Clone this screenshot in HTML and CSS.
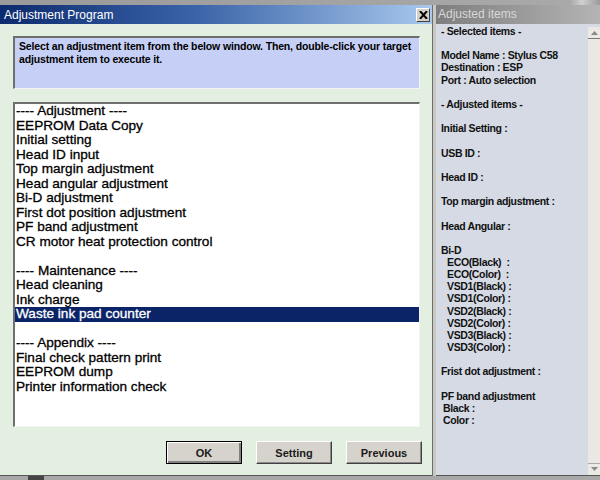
FILE: index.html
```html
<!DOCTYPE html>
<html>
<head>
<meta charset="utf-8">
<link rel="stylesheet" href="styles.css">
</head>
<body>
<div class="topstrip"></div>
<div class="desk">
  <div class="dialog">
    <div class="titlebar">
      <span class="title">Adjustment Program</span>
      <span class="close"><svg width="9" height="8" viewBox="0 0 9 8"><path d="M1 0 L8 8 M8 0 L1 8" stroke="#000" stroke-width="2"/></svg></span>
    </div>
    <div class="body">
      <div class="info">Select an adjustment item from the below window. Then, double-click your target adjustment item to execute it.</div>
      <div class="list">
        <div class="row">---- Adjustment ----</div>
        <div class="row">EEPROM Data Copy</div>
        <div class="row">Initial setting</div>
        <div class="row">Head ID input</div>
        <div class="row">Top margin adjustment</div>
        <div class="row">Head angular adjustment</div>
        <div class="row">Bi-D adjustment</div>
        <div class="row">First dot position adjustment</div>
        <div class="row">PF band adjustment</div>
        <div class="row">CR motor heat protection control</div>
        <div class="row">&nbsp;</div>
        <div class="row">---- Maintenance ----</div>
        <div class="row">Head cleaning</div>
        <div class="row">Ink charge</div>
        <div class="row selected">Waste ink pad counter</div>
        <div class="row">&nbsp;</div>
        <div class="row">---- Appendix ----</div>
        <div class="row">Final check pattern print</div>
        <div class="row">EEPROM dump</div>
        <div class="row">Printer information check</div>
      </div>
      <div class="buttons">
        <button class="btn default">OK</button>
        <button class="btn">Setting</button>
        <button class="btn">Previous</button>
      </div>
    </div>
  </div>
  <div class="side">
    <div class="sidetitle">Adjusted items</div>
    <div class="sidebody">
      <div class="sidetext">
        <div>- Selected items -</div>
        <div>&nbsp;</div>
        <div>Model Name : Stylus C58</div>
        <div>Destination : ESP</div>
        <div>Port : Auto selection</div>
        <div>&nbsp;</div>
        <div>- Adjusted items -</div>
        <div>&nbsp;</div>
        <div>Initial Setting :</div>
        <div>&nbsp;</div>
        <div>USB ID :</div>
        <div>&nbsp;</div>
        <div>Head ID :</div>
        <div>&nbsp;</div>
        <div>Top margin adjustment :</div>
        <div>&nbsp;</div>
        <div>Head Angular :</div>
        <div>&nbsp;</div>
        <div>Bi-D</div>
        <div class="ind2">ECO(Black)&nbsp; :</div>
        <div class="ind2">ECO(Color)&nbsp; :</div>
        <div class="ind2">VSD1(Black) :</div>
        <div class="ind2">VSD1(Color) :</div>
        <div class="ind2">VSD2(Black) :</div>
        <div class="ind2">VSD2(Color) :</div>
        <div class="ind2">VSD3(Black) :</div>
        <div class="ind2">VSD3(Color) :</div>
        <div>&nbsp;</div>
        <div>Frist dot adjustment :</div>
        <div>&nbsp;</div>
        <div>PF band adjustment</div>
        <div class="ind1">Black :</div>
        <div class="ind1">Color :</div>
      </div>
      <div class="scrollbar">
        <div class="arrow up"><svg width="7" height="4" viewBox="0 0 7 4"><path d="M0 4 L3.5 0 L7 4Z" fill="#8a8a8a"/></svg></div>
        <div class="track"></div>
        <div class="arrow down"><svg width="7" height="4" viewBox="0 0 7 4"><path d="M0 0 L3.5 4 L7 0Z" fill="#8a8a8a"/></svg></div>
      </div>
    </div>
  </div>
</div>
<div class="bottomstrip"><span class="blk"></span></div>
</body>
</html>
```

FILE: styles.css
```css
html, body {
  margin: 0;
  padding: 0;
}
body {
  width: 600px;
  height: 480px;
  overflow: hidden;
  background: #a8a8a8;
  font-family: "Liberation Sans", Arial, sans-serif;
}
.topstrip {
  height: 5px;
  background: linear-gradient(to right, #9a9a9a, #a9a9a9 95%, #d0d0d0 97%, #9a9a9a);
}
.desk {
  display: flex;
  height: 471px;
}
.dialog {
  width: 432px;
  display: flex;
  flex-direction: column;
  border-right: 1px solid #6e6e6e;
}
.titlebar {
  height: 19px;
  display: flex;
  align-items: center;
  justify-content: space-between;
  padding: 0 2px 0 4px;
  background: linear-gradient(to right, #0c2a6e 0%, #3a63a8 45%, #a8c8ee 100%);
}
.title {
  color: #fff;
  font-size: 12px;
}
.close {
  width: 14px;
  height: 14px;
  background: #d4d0c8;
  border: 1px solid;
  border-color: #fff #404040 #404040 #fff;
  display: flex;
  align-items: center;
  justify-content: center;
  box-sizing: border-box;
}
.body {
  flex: 1;
  background: #e2efe1;
  padding: 12px 12px 0 13px;
  display: flex;
  flex-direction: column;
  border-bottom: 1px solid #555;
}
.info {
  height: 53px;
  box-sizing: border-box;
  background: #c6d0f6;
  border-top: 2px solid #6f6f6f;
  border-left: 2px solid #6f6f6f;
  border-bottom: 1px solid #f4f4f4;
  border-right: 1px solid #f4f4f4;
  padding: 2px 2px 0 4px;
  font-size: 10.5px;
  letter-spacing: -0.15px;
  font-weight: bold;
  line-height: 13px;
  color: #000;
}
.list {
  margin-top: 13px;
  height: 325px;
  box-sizing: border-box;
  background: #fff;
  border-top: 2px solid #6f6f6f;
  border-left: 2px solid #6f6f6f;
  border-bottom: 1px solid #f4f4f4;
  border-right: 1px solid #f4f4f4;
  padding-top: 0;
}
.row {
  height: 14.5px;
  line-height: 14.5px;
  font-size: 13.6px;
  padding-left: 1px;
  color: #000;
  white-space: nowrap;
  -webkit-text-stroke: 0.3px #000;
}
.row.selected {
  background: #0b2468;
  color: #fff;
  -webkit-text-stroke: 0.3px #fff;
}
.buttons {
  display: flex;
  justify-content: flex-end;
  gap: 14px;
  margin-top: 14px;
  margin-right: -2px;
}
.btn {
  width: 76px;
  height: 23px;
  background: #d6d3cc;
  border: 1px solid;
  border-color: #fff #404040 #404040 #fff;
  box-shadow: inset -1px -1px 0 #8a8a8a;
  font-family: "Liberation Sans", Arial, sans-serif;
  font-size: 11px;
  font-weight: bold;
  color: #1a1a1a;
  padding: 0;
}
.btn.default {
  border: 1px solid #000;
  box-shadow: inset 1px 1px 0 #fff, inset -2px -2px 0 #808080;
}
.side {
  flex: 1;
  display: flex;
  flex-direction: column;
  border-left: 3px solid #c9c9c4;
}
.sidetitle {
  height: 19px;
  line-height: 19px;
  padding-left: 2px;
  font-size: 12px;
  color: #d8d8d8;
  background: linear-gradient(to right, #7e7e7e, #b4b4b4);
}
.sidebody {
  flex: 1;
  display: flex;
  background: #d5dae4;
  border-bottom: 1px solid #555;
}
.sidetext {
  flex: 1;
  padding: 1px 0 0 5px;
  font-size: 10.5px;
  font-weight: bold;
  line-height: 12.15px;
  color: #111;
  letter-spacing: -0.35px;
}
.sidetext div {
  white-space: nowrap;
}
.ind1 { padding-left: 2px; }
.ind2 { padding-left: 6px; }
.scrollbar {
  width: 12px;
  margin-top: 3px;
  display: flex;
  flex-direction: column;
  background: #ebe8e3;
}
.arrow {
  height: 12px;
  display: flex;
  align-items: center;
  justify-content: center;
  background: #ece9e4;
  box-shadow: inset 0 -1px 0 #777;
}
.arrow.down {
  box-shadow: inset 0 1px 0 #aaa;
}
.track { flex: 1; }
.bottomstrip {
  height: 4px;
  background: #a8a8a8;
  position: relative;
}
.blk {
  position: absolute;
  left: 28px;
  top: 0;
  width: 16px;
  height: 4px;
  background: #444;
}
```
